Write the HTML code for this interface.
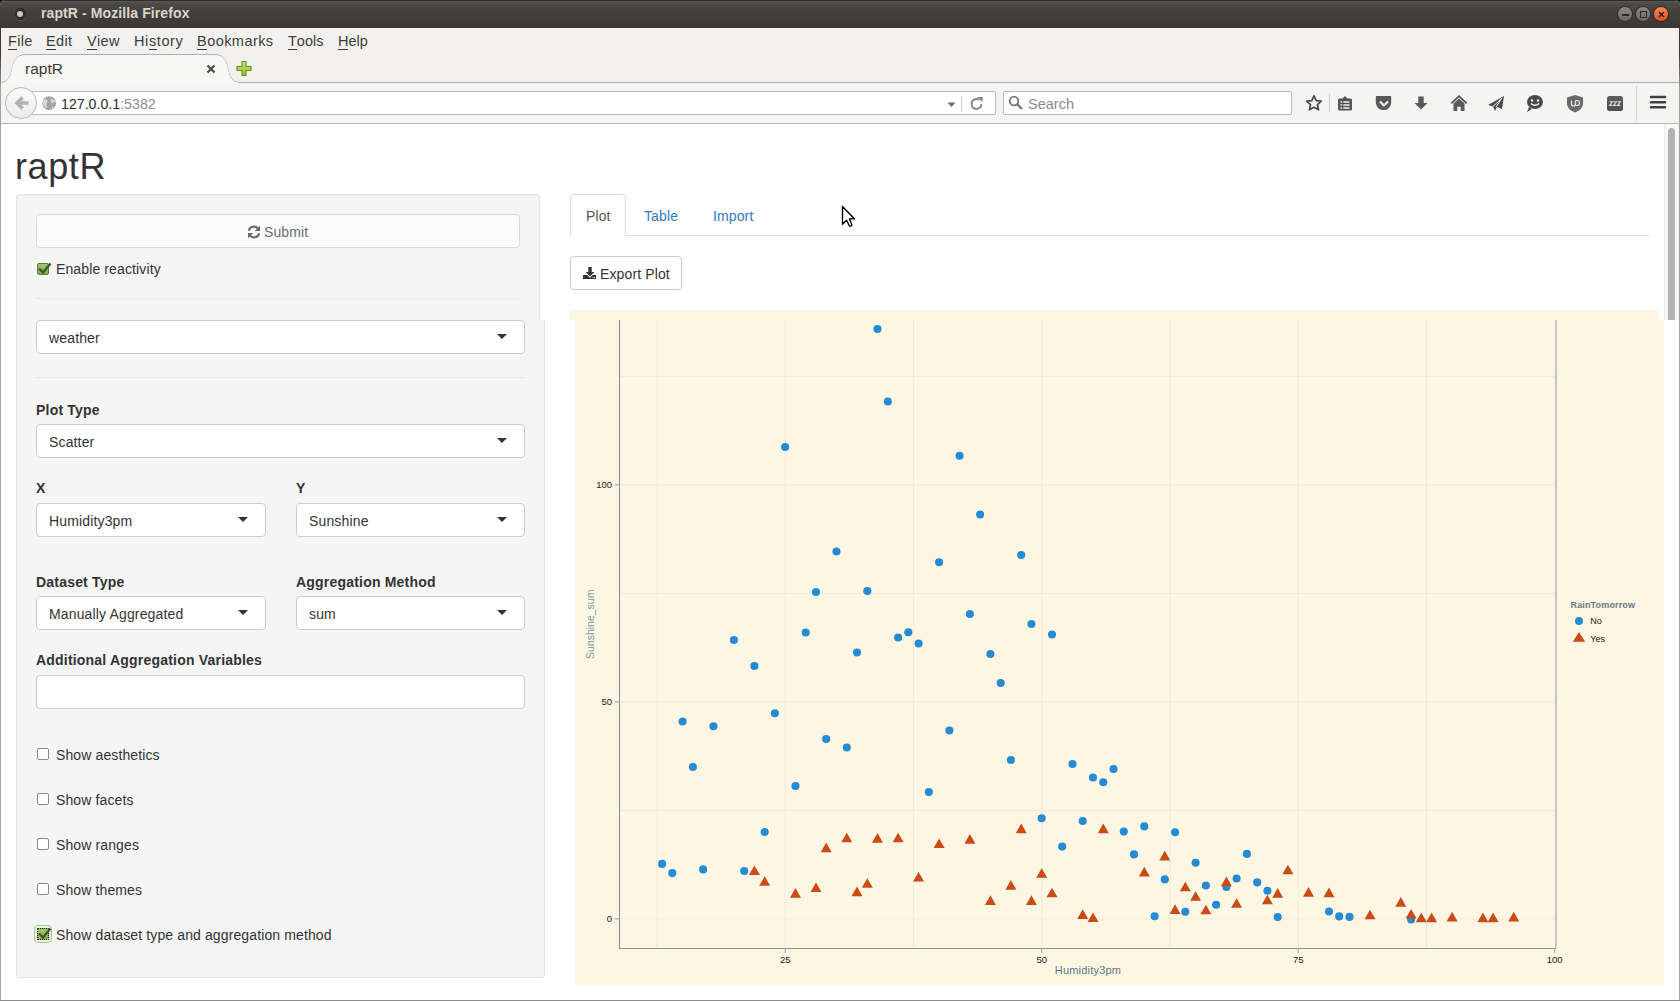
<!DOCTYPE html>
<html><head><meta charset="utf-8"><title>raptR</title>
<style>
*{box-sizing:border-box}
html,body{margin:0;padding:0}
body{width:1680px;height:1001px;overflow:hidden;position:relative;background:#000;font-family:"Liberation Sans",sans-serif;color:#333}
.a{position:absolute}
#win{left:0;top:0;width:1680px;height:1001px;background:#fff;border-radius:5px 5px 0 0;overflow:hidden}
#titlebar{left:0;top:0;width:1680px;height:28px;background:linear-gradient(#2e2d2a 0px,#2e2d2a 1px,#5a5955 1px,#4c4b47 3px,#403f3b 14px,#393834 28px)}
#ttl{left:41px;top:5px;font-size:14px;font-weight:bold;letter-spacing:0.1px;color:#d9d5cc;white-space:nowrap}
#menubar{left:0;top:28px;width:1680px;height:26px;background:#f2f1f0}
.mi{position:absolute;top:5px;font-size:14.5px;color:#3c3c3c;white-space:nowrap;line-height:16px}
.mi u{text-decoration:none;position:relative}
.mi u:after{content:"";position:absolute;left:0;right:0;top:16px;height:1px;background:#3c3c3c}
#tabstrip{left:0;top:54px;width:1680px;height:28px;background:#f2f1f0}
#navbar{left:0;top:83px;width:1680px;height:41px;background:#f4f4f3;border-bottom:1px solid #b8b5b0}
.bl{left:0;top:28px;width:1px;height:973px;background:linear-gradient(#33322e 0px,#3a3935 25px,#a5a19c 62px,#a5a19c 100%)}
.br{left:1679px;top:28px;width:1px;height:973px;background:linear-gradient(#33322e 0px,#3a3935 25px,#a5a19c 62px,#a5a19c 100%)}
.bb{left:0;top:1000px;width:1680px;height:1px;background:#8e8c88}
/* page */
.pg{font-family:"Liberation Sans",sans-serif;font-size:14px;color:#333;line-height:20px;white-space:nowrap;letter-spacing:0.12px}
.well{background:#f5f5f5;border:1px solid #e3e3e3;border-radius:4px;box-shadow:inset 0 1px 1px rgba(0,0,0,.05)}
.sel{background:#fff;border:1px solid #ccc;border-radius:4px;height:34px}
.sel span{position:absolute;left:12px;top:9px;font-size:14px;color:#333;letter-spacing:0.15px;white-space:nowrap}
.sel i{position:absolute;right:17px;top:13px;width:0;height:0;border-left:5px solid transparent;border-right:5px solid transparent;border-top:5px solid #333}
.lbl{font-weight:bold;font-size:14px;color:#333;letter-spacing:0.2px}
.cb{width:12px;height:12px;border:1px solid #8a8a8a;border-radius:2px;background:#fff}
</style></head><body>
<div id="win" class="a">
<div id="titlebar" class="a">
  <div class="a" style="left:14.5px;top:8px;width:11.5px;height:11.5px;border-radius:50%;background:#2f2e2b;box-shadow:0 1px 0 rgba(255,255,255,.14)"></div>
  <div class="a" style="left:17px;top:10.8px;width:6.3px;height:6.3px;border-radius:50%;background:#cdcac4"></div>
  <div id="ttl" class="a">raptR - Mozilla Firefox</div>
  <div class="a" style="left:1617px;top:6px;width:16px;height:16px;border-radius:50%;background:linear-gradient(#8a8985,#6a6965);border:1px solid #2f2e2b"></div>
  <div class="a" style="left:1622px;top:14px;width:7px;height:1.5px;background:#2d2c29"></div>
  <div class="a" style="left:1635px;top:6px;width:16px;height:16px;border-radius:50%;background:linear-gradient(#8a8985,#6a6965);border:1px solid #2f2e2b"></div>
  <div class="a" style="left:1640px;top:11px;width:6.5px;height:6.5px;border:1.2px solid #2d2c29"></div>
  <div class="a" style="left:1653px;top:6px;width:16px;height:16px;border-radius:50%;background:linear-gradient(#f5865a,#e2531c);border:1px solid #3a2a22"></div>
  <svg class="a" style="left:1658px;top:11px" width="7" height="7"><path d="M1 1l5 5M6 1L1 6" stroke="#2a1a12" stroke-width="1.3"/></svg>
</div>
<div id="menubar" class="a">
  <span class="mi" style="left:8px;letter-spacing:0.35px"><u>F</u>ile</span>
  <span class="mi" style="left:46px;letter-spacing:0.35px"><u>E</u>dit</span>
  <span class="mi" style="left:87px;letter-spacing:0.35px"><u>V</u>iew</span>
  <span class="mi" style="left:134px;letter-spacing:0.6px">Hi<u>s</u>tory</span>
  <span class="mi" style="left:197px;letter-spacing:0.45px"><u>B</u>ookmarks</span>
  <span class="mi" style="left:288px"><u>T</u>ools</span>
  <span class="mi" style="left:338px"><u>H</u>elp</span>
</div>
<div id="tabstrip" class="a">
  <div class="a" style="left:0;top:0;width:1680px;height:28px;background:#f1f0ef"></div>
  <div class="a" style="left:0;top:28px;width:1680px;height:1px;background:#f4f4f3"></div>
  <svg class="a" style="left:0;top:0" width="1680" height="30">
    <path d="M0 28.5 C7 28.5 10 25 12 15 C14 4 18 0.5 27 0.5 L213 0.5 C222 0.5 226 4 228 15 C230 25 233 28.5 240 28.5 L1680 28.5" fill="none" stroke="#a9aeb3" stroke-width="1"/>
    <path d="M0 29 C7 29 10 25 12 15 C14 4 18 1 27 1 L213 1 C222 1 226 4 228 15 C230 25 233 29 240 29 Z" fill="#f6f6f5"/>
  </svg>
  <div class="a pg" style="left:25px;top:5px;font-size:15.5px;color:#3a3a3a;letter-spacing:0">raptR</div>
  <svg class="a" style="left:206px;top:10px" width="10" height="10"><path d="M1.5 1.5L8.5 8.5M8.5 1.5L1.5 8.5" stroke="#4a4a4a" stroke-width="2.2"/></svg>
  <svg class="a" style="left:235px;top:6px" width="18" height="18"><defs><linearGradient id="pg" x1="0" y1="0" x2="0" y2="1"><stop offset="0" stop-color="#d8ea72"/><stop offset="1" stop-color="#8fb832"/></linearGradient></defs><path d="M7 1.5h4v5h5v4h-5v5H7v-5H2v-4h5z" fill="url(#pg)" stroke="#5e9a1f" stroke-width="1.2"/></svg>
</div>
<div id="navbar" class="a">
  <div class="a" style="left:30px;top:8px;width:966px;height:24px;background:#fff;border:1px solid #b9b9b9;border-radius:2px"></div>
  <div class="a" style="left:5px;top:4px;width:32px;height:32px;border-radius:50%;background:linear-gradient(#fbfbfb,#ececec);border:1px solid #b2bac2"></div>
  <svg class="a" style="left:12px;top:11px" width="18" height="18"><path d="M16.5 9H5M10.5 3.5L5 9l5.5 5.5" stroke="#b0b0b0" stroke-width="3.6" fill="none" stroke-linejoin="miter" stroke-linecap="butt"/></svg>
  <svg class="a" style="left:42px;top:13px" width="15" height="15"><circle cx="7.2" cy="7.2" r="6.9" fill="#a2a2a2"/><path d="M3.2 3c1.6.2 2.6 1.3 2.4 2.6-.2 1.2-1.4 1.6-1.2 2.9.2 1.3 1 2.2.6 3.6C3 11.5 1.6 10 1 8c-.4-2 .6-4 2.2-5zM8.3 1.2c.8.6.4 1.7 1.4 2.2 1 .4 2.6-.3 3.4.7.6 1.2-.4 2.2-1.6 2.4-1.3.2-2.2.6-2.2 1.8 0 1.3 1.5 1.8 1.8 3.1.2.8-.1 1.6-.6 2.2" fill="#dadada"/></svg>
  <div class="a" style="left:61px;top:12.5px;font-size:14.2px;color:#2e2e2e;white-space:nowrap">127.0.0.1<span style="color:#8c8c8c">:5382</span></div>
  <svg class="a" style="left:947px;top:19px" width="9" height="6"><path d="M0.5 0.5h8L4.5 5z" fill="#6f6f6f"/></svg>
  <div class="a" style="left:961px;top:13px;width:1px;height:16px;background:#d0d0d0"></div>
  <svg class="a" style="left:969px;top:13px" width="16" height="16"><path d="M12.5 8A5 5 0 1 1 10 3.6" stroke="#888" stroke-width="2" fill="none"/><path d="M8 1l6 0l-1 5z" fill="#888"/></svg>
  <div class="a" style="left:1003px;top:8px;width:289px;height:24px;background:#fff;border:1px solid #b9b9b9;border-radius:2px"></div>
  <svg class="a" style="left:1008px;top:12px" width="16" height="16"><circle cx="6" cy="6" r="4.3" stroke="#777" stroke-width="1.8" fill="none"/><path d="M9 9l5 5" stroke="#777" stroke-width="2.4"/></svg>
  <div class="a" style="left:1028px;top:12.5px;font-size:14.5px;color:#8c8c8c">Search</div>
  <!-- toolbar icons -->
  <svg class="a" style="left:1304px;top:10px" width="20" height="20"><path d="M10 2.8l2.2 4.8 5.1.6-3.8 3.5 1.1 5.1L10 14.2l-4.6 2.6 1.1-5.1-3.8-3.5 5.1-.6z" fill="none" stroke="#4a4a4a" stroke-width="1.7" stroke-linejoin="round"/></svg>
  <div class="a" style="left:1329px;top:11px;width:1px;height:18px;background:#c9cfd6"></div>
  <svg class="a" style="left:1337px;top:12px" width="16" height="17"><rect x="1" y="3.5" width="14" height="12" rx="1.5" fill="#555"/><path d="M5 4L8 1l3 3z" fill="#555"/><path d="M3.5 7h1.6M6.3 7h6.2M3.5 10h1.6M6.3 10h6.2M3.5 13h1.6M6.3 13h6.2" stroke="#f4f4f3" stroke-width="1.4"/></svg>
  <svg class="a" style="left:1375px;top:12px" width="18" height="16"><path d="M1.5 1.8h14v5.8a7 6.8 0 0 1-14 0z" fill="#595959" stroke="#595959" stroke-linejoin="round" stroke-width="1.4"/><path d="M5 6.5l4 4 4-4" stroke="#f2f1f0" stroke-width="2.2" fill="none"/></svg>
  <svg class="a" style="left:1413px;top:12px" width="16" height="17"><path d="M5.3 1.5h5.4v6.5h3.8L8 14.5 1.5 8h3.8z" fill="#595959"/></svg>
  <svg class="a" style="left:1450px;top:12px" width="18" height="17"><path d="M1.3 8.3L9 1.2l7.7 7.1" stroke="#555" stroke-width="1.8" fill="none"/><path d="M3.5 8.5L9 3.6l5.5 4.9V16h-3.8v-4.2H7.3V16H3.5z" fill="#5a5a5a"/></svg>
  <svg class="a" style="left:1487px;top:12px" width="18" height="17" viewBox="0 0 18 17" preserveAspectRatio="none"><path d="M17 1L1 10l5 1.5L8 16l2-4 5 2z" fill="#4a4a4a"/><path d="M6 11.5L15 3 9 12" stroke="#f2f1f0" stroke-width="1" fill="none"/></svg>
  <svg class="a" style="left:1526px;top:11px" width="18" height="19"><ellipse cx="9" cy="8" rx="8" ry="7" fill="#4a4a4a"/><path d="M3 13l-2 5 5-3z" fill="#4a4a4a"/><circle cx="6" cy="6.5" r="1.2" fill="#f2f1f0"/><circle cx="12" cy="6.5" r="1.2" fill="#f2f1f0"/><path d="M5 9.5q4 3.5 8 0" stroke="#f2f1f0" stroke-width="1.4" fill="none"/></svg>
  <svg class="a" style="left:1566px;top:11px" width="18" height="19"><path d="M9 1l8 2.5v6C17 14 13 17 9 18.5 5 17 1 14 1 9.5v-6z" fill="#6a6a6a"/><path d="M5.5 6.5v3.5a2 2 0 0 0 4 0V6.5M9.5 6.5h1.5a2.5 2.5 0 0 1 0 5H9.5" stroke="#e6e6e6" stroke-width="1.2" fill="none"/></svg>
  <svg class="a" style="left:1607px;top:12.5px" width="17" height="16"><defs><linearGradient id="zg" x1="0" y1="0" x2="0" y2="1"><stop offset="0" stop-color="#5e5e5e"/><stop offset="1" stop-color="#505050"/></linearGradient></defs><rect x="0" y="0" width="16" height="15" rx="2.5" fill="url(#zg)"/><path d="M2.6 5.8h2.8L2.6 9.4h2.8M6.6 5.8h2.8L6.6 9.4h2.8M10.6 5.8h2.8l-2.8 3.6h2.8" stroke="#dcdcdc" stroke-width="1.1" fill="none"/></svg>
  <div class="a" style="left:1636px;top:3px;width:1px;height:35px;background:#d4d2cf"></div>
  <svg class="a" style="left:1648px;top:11px" width="20" height="17"><path d="M3 2.9H17M3 8.3H17M3 13.3H17" stroke="#3f3f3f" stroke-width="2.5" stroke-linecap="round"/></svg>
</div>
<!-- PAGE -->
<div class="a" style="left:1664px;top:124px;width:15px;height:196px;background:#f9f9f9;border-left:1px solid #efefef"></div>
<div class="a" style="left:1668px;top:128px;width:7px;height:192px;background:#b3b3b3;border-radius:4px 4px 0 0"></div>

<div class="a pg" style="left:15px;top:147px;font-size:36px;line-height:40px;font-weight:500;letter-spacing:0.6px">raptR</div>

<!-- well -->
<div class="a" style="left:16px;top:194px;width:524px;height:126px;background:#f5f5f5;border:1px solid #e3e3e3;border-bottom:none;border-radius:4px 4px 0 0;box-shadow:inset 0 1px 1px rgba(0,0,0,.04)"></div>
<div class="a" style="left:16px;top:320px;width:529px;height:658px;background:#f5f5f5;border:1px solid #e3e3e3;border-top:none;border-radius:0 0 4px 4px"></div>
<!-- submit -->
<div class="a" style="left:36px;top:214px;width:484px;height:34px;background:#fbfbfb;border:1px solid #d8d8d8;border-radius:4px"></div>
<svg class="a" style="left:247px;top:225px" width="14" height="14"><g fill="none" stroke="#6a6a6a" stroke-width="2.1"><path d="M1.7 5.6A5.5 5.5 0 0 1 11.2 3.6"/><path d="M12.3 8.4A5.5 5.5 0 0 1 2.8 10.4"/></g><g fill="#6a6a6a"><path d="M13 0.7V6H7.7Z"/><path d="M1 13.3V8H6.3Z"/></g></svg>
<div class="a pg" style="left:264px;top:222px;color:#6d6d6d">Submit</div>

<div class="a" style="left:37px;top:263px;width:12px;height:12px;background:linear-gradient(#a3c46c,#86ad4e);border:1px solid #5a7a38;border-radius:2px"></div>
<svg class="a" style="left:36px;top:260px" width="17" height="16"><path d="M3 8.5l4 4L14.5 3.5" stroke="#3f5530" stroke-width="2.4" fill="none"/></svg>
<div class="a pg" style="left:56px;top:259px">Enable reactivity</div>

<div class="a" style="left:36px;top:298px;width:484px;height:1px;background:#e8e8e8"></div>

<div class="a sel" style="left:36px;top:320px;width:489px"><span>weather</span><i></i></div>
<div class="a" style="left:36px;top:377px;width:489px;height:1px;background:#e8e8e8"></div>

<div class="a pg lbl" style="left:36px;top:400px">Plot Type</div>
<div class="a sel" style="left:36px;top:424px;width:489px"><span>Scatter</span><i></i></div>

<div class="a pg lbl" style="left:36px;top:478px">X</div>
<div class="a sel" style="left:36px;top:503px;width:230px"><span>Humidity3pm</span><i></i></div>
<div class="a pg lbl" style="left:296px;top:478px">Y</div>
<div class="a sel" style="left:296px;top:503px;width:229px"><span>Sunshine</span><i></i></div>

<div class="a pg lbl" style="left:36px;top:572px">Dataset Type</div>
<div class="a sel" style="left:36px;top:596px;width:230px"><span>Manually Aggregated</span><i></i></div>
<div class="a pg lbl" style="left:296px;top:572px">Aggregation Method</div>
<div class="a sel" style="left:296px;top:596px;width:229px"><span>sum</span><i></i></div>

<div class="a pg lbl" style="left:36px;top:650px">Additional Aggregation Variables</div>
<div class="a sel" style="left:36px;top:675px;width:489px"></div>

<div class="a cb" style="left:37px;top:748px"></div><div class="a pg" style="left:56px;top:745px">Show aesthetics</div>
<div class="a cb" style="left:37px;top:793px"></div><div class="a pg" style="left:56px;top:790px">Show facets</div>
<div class="a cb" style="left:37px;top:838px"></div><div class="a pg" style="left:56px;top:835px">Show ranges</div>
<div class="a cb" style="left:37px;top:883px"></div><div class="a pg" style="left:56px;top:880px">Show themes</div>
<div class="a" style="left:34px;top:925px;width:18px;height:18px;border:1.5px solid #a8cf8a;border-radius:4px;background:#eaf3e3"></div>
<div class="a" style="left:37px;top:928px;width:12px;height:12px;background:linear-gradient(#a3c46c,#86ad4e);border:1px dotted #222;border-radius:1px"></div>
<svg class="a" style="left:36px;top:925px" width="17" height="16"><path d="M3 8.5l4 4L14.5 3.5" stroke="#3f5530" stroke-width="2.4" fill="none"/></svg>
<div class="a pg" style="left:56px;top:925px">Show dataset type and aggregation method</div>

<!-- tabs -->
<div class="a" style="left:570px;top:235px;width:1079px;height:1px;background:#ddd"></div>
<div class="a" style="left:570px;top:194px;width:56px;height:42px;background:#fff;border:1px solid #ddd;border-bottom-color:#fff;border-radius:4px 4px 0 0"></div>
<div class="a pg" style="left:586px;top:206px;color:#555">Plot</div>
<div class="a pg" style="left:644px;top:206px;color:#337ab7">Table</div>
<div class="a pg" style="left:713px;top:206px;color:#337ab7">Import</div>

<div class="a" style="left:570px;top:256px;width:112px;height:34px;background:#fff;border:1px solid #ccc;border-radius:4px"></div>
<svg class="a" style="left:583px;top:266px" width="14" height="14"><path d="M5.3 1h3.4v5h2.8L7 10.3 2.5 6h2.8z" fill="#333"/><path d="M0 9h4.2L7 11.8 9.8 9H13v4H0z" fill="#333"/><circle cx="10" cy="11.6" r=".6" fill="#fff"/><circle cx="11.7" cy="11.6" r=".6" fill="#fff"/></svg>
<div class="a pg" style="left:600px;top:264px">Export Plot</div>

<!-- PLOT -->
<div class="a" style="left:570px;top:310px;width:1089px;height:10px;background:#fdf6e3"></div>
<div class="a" style="left:575px;top:320px;width:1089px;height:665px;background:#fdf6e3"></div>
<svg class="a" style="left:0;top:0" width="1680" height="1001" id="plot">
<g stroke="#f0ead8" stroke-width="1" fill="none"><path d="M657.0 320V948"/><path d="M785.2 320V948"/><path d="M913.5 320V948"/><path d="M1041.7 320V948"/><path d="M1170.0 320V948"/><path d="M1298.2 320V948"/><path d="M1426.5 320V948"/><path d="M620 918.9H1555"/><path d="M620 810.4H1555"/><path d="M620 701.9H1555"/><path d="M620 593.4H1555"/><path d="M620 484.9H1555"/><path d="M620 376.4H1555"/></g>
<path d="M619.5 320V948.5H1556" stroke="#85959a" stroke-width="1.1" fill="none"/>
<path d="M1556 320V948" stroke="#bdc3bd" stroke-width="1.8" fill="none"/>
<g stroke="#93a1a1" stroke-width="1"><path d="M785.2 948.4V953"/><path d="M1041.7 948.4V953"/><path d="M1298.2 948.4V953"/><path d="M1554.7 948.4V953"/><path d="M615 918.9H619.5"/><path d="M615 701.9H619.5"/><path d="M615 484.9H619.5"/></g>
<g font-family="Liberation Sans" font-size="9.5px" fill="#1a1a1a"><text x="785.2" y="963" text-anchor="middle">25</text><text x="1041.7" y="963" text-anchor="middle">50</text><text x="1298.2" y="963" text-anchor="middle">75</text><text x="1554.7" y="963" text-anchor="middle">100</text><text x="612" y="922.3" text-anchor="end">0</text><text x="612" y="705.3" text-anchor="end">50</text><text x="612" y="488.3" text-anchor="end">100</text></g>
<text x="1088" y="974" text-anchor="middle" font-family="Liberation Sans" font-size="11px" letter-spacing="0.2" fill="#5e7884">Humidity3pm</text>
<text transform="translate(594 624.3) rotate(-90)" text-anchor="middle" font-family="Liberation Sans" font-size="10.5px" fill="#7d98a3">Sunshine_sum</text>
<g fill="#268bd2"><circle cx="877.5" cy="329.0" r="4.05"/><circle cx="887.8" cy="401.5" r="4.05"/><circle cx="785.2" cy="447.0" r="4.05"/><circle cx="836.5" cy="551.5" r="4.05"/><circle cx="959.6" cy="455.8" r="4.05"/><circle cx="980.1" cy="514.5" r="4.05"/><circle cx="1021.2" cy="555.0" r="4.05"/><circle cx="816.0" cy="592.0" r="4.05"/><circle cx="867.3" cy="591.0" r="4.05"/><circle cx="733.9" cy="640.0" r="4.05"/><circle cx="805.7" cy="632.5" r="4.05"/><circle cx="898.1" cy="637.5" r="4.05"/><circle cx="857.0" cy="652.5" r="4.05"/><circle cx="754.4" cy="666.0" r="4.05"/><circle cx="774.9" cy="713.2" r="4.05"/><circle cx="682.6" cy="721.5" r="4.05"/><circle cx="713.4" cy="726.2" r="4.05"/><circle cx="826.2" cy="739.0" r="4.05"/><circle cx="846.8" cy="747.5" r="4.05"/><circle cx="692.9" cy="767.0" r="4.05"/><circle cx="795.5" cy="786.0" r="4.05"/><circle cx="939.1" cy="562.2" r="4.05"/><circle cx="969.9" cy="614.0" r="4.05"/><circle cx="1031.4" cy="624.0" r="4.05"/><circle cx="1052.0" cy="634.5" r="4.05"/><circle cx="908.3" cy="632.2" r="4.05"/><circle cx="918.6" cy="643.5" r="4.05"/><circle cx="990.4" cy="654.0" r="4.05"/><circle cx="1000.7" cy="683.0" r="4.05"/><circle cx="949.4" cy="730.5" r="4.05"/><circle cx="1010.9" cy="760.0" r="4.05"/><circle cx="1072.5" cy="764.0" r="4.05"/><circle cx="1113.5" cy="769.0" r="4.05"/><circle cx="1093.0" cy="777.5" r="4.05"/><circle cx="1103.3" cy="782.2" r="4.05"/><circle cx="764.7" cy="832.0" r="4.05"/><circle cx="662.1" cy="863.9" r="4.05"/><circle cx="672.3" cy="873.1" r="4.05"/><circle cx="703.1" cy="869.4" r="4.05"/><circle cx="744.2" cy="871.0" r="4.05"/><circle cx="928.8" cy="792.1" r="4.05"/><circle cx="1041.7" cy="818.2" r="4.05"/><circle cx="1082.7" cy="821.0" r="4.05"/><circle cx="1062.2" cy="846.6" r="4.05"/><circle cx="1123.8" cy="831.6" r="4.05"/><circle cx="1144.3" cy="826.4" r="4.05"/><circle cx="1175.1" cy="832.3" r="4.05"/><circle cx="1134.0" cy="854.4" r="4.05"/><circle cx="1195.6" cy="862.7" r="4.05"/><circle cx="1246.9" cy="853.9" r="4.05"/><circle cx="1164.8" cy="879.4" r="4.05"/><circle cx="1205.9" cy="885.5" r="4.05"/><circle cx="1226.4" cy="886.9" r="4.05"/><circle cx="1236.6" cy="878.5" r="4.05"/><circle cx="1257.2" cy="882.4" r="4.05"/><circle cx="1267.4" cy="890.8" r="4.05"/><circle cx="1216.1" cy="904.7" r="4.05"/><circle cx="1185.3" cy="911.8" r="4.05"/><circle cx="1154.6" cy="916.2" r="4.05"/><circle cx="1277.7" cy="917.1" r="4.05"/><circle cx="1329.0" cy="911.5" r="4.05"/><circle cx="1339.2" cy="916.4" r="4.05"/><circle cx="1349.5" cy="916.9" r="4.05"/><circle cx="1411.1" cy="919.5" r="4.05"/></g>
<g fill="#cb4b16"><path d="M754.4 865.4L759.9 875.0L748.9 875.0Z"/><path d="M764.7 876.2L770.2 885.8L759.2 885.8Z"/><path d="M795.5 888.1L801.0 897.7L790.0 897.7Z"/><path d="M816.0 882.5L821.5 892.1L810.5 892.1Z"/><path d="M826.2 842.6L831.7 852.2L820.7 852.2Z"/><path d="M846.8 832.7L852.3 842.3L841.3 842.3Z"/><path d="M857.0 886.6L862.5 896.2L851.5 896.2Z"/><path d="M867.3 878.2L872.8 887.8L861.8 887.8Z"/><path d="M877.5 833.1L883.0 842.7L872.0 842.7Z"/><path d="M898.1 832.7L903.6 842.3L892.6 842.3Z"/><path d="M939.1 838.5L944.6 848.1L933.6 848.1Z"/><path d="M969.9 834.1L975.4 843.7L964.4 843.7Z"/><path d="M1021.2 823.6L1026.7 833.2L1015.7 833.2Z"/><path d="M1103.3 823.6L1108.8 833.2L1097.8 833.2Z"/><path d="M918.6 872.0L924.1 881.6L913.1 881.6Z"/><path d="M990.4 895.3L995.9 904.9L984.9 904.9Z"/><path d="M1010.9 880.1L1016.4 889.7L1005.4 889.7Z"/><path d="M1031.4 895.3L1036.9 904.9L1025.9 904.9Z"/><path d="M1041.7 868.2L1047.2 877.8L1036.2 877.8Z"/><path d="M1052.0 887.7L1057.5 897.3L1046.5 897.3Z"/><path d="M1082.7 909.3L1088.2 918.9L1077.2 918.9Z"/><path d="M1093.0 912.5L1098.5 922.1L1087.5 922.1Z"/><path d="M1164.8 850.8L1170.3 860.4L1159.3 860.4Z"/><path d="M1144.3 866.8L1149.8 876.4L1138.8 876.4Z"/><path d="M1185.3 881.7L1190.8 891.3L1179.8 891.3Z"/><path d="M1195.6 891.2L1201.1 900.8L1190.1 900.8Z"/><path d="M1175.1 904.3L1180.6 913.9L1169.6 913.9Z"/><path d="M1205.9 904.7L1211.4 914.3L1200.4 914.3Z"/><path d="M1226.4 876.6L1231.9 886.2L1220.9 886.2Z"/><path d="M1236.6 898.2L1242.1 907.8L1231.1 907.8Z"/><path d="M1267.4 894.7L1272.9 904.3L1261.9 904.3Z"/><path d="M1277.7 888.1L1283.2 897.7L1272.2 897.7Z"/><path d="M1287.9 864.7L1293.4 874.3L1282.4 874.3Z"/><path d="M1308.5 887.1L1314.0 896.7L1303.0 896.7Z"/><path d="M1329.0 887.6L1334.5 897.2L1323.5 897.2Z"/><path d="M1370.0 909.7L1375.5 919.3L1364.5 919.3Z"/><path d="M1400.8 897.1L1406.3 906.7L1395.3 906.7Z"/><path d="M1411.1 908.9L1416.6 918.5L1405.6 918.5Z"/><path d="M1421.3 912.6L1426.8 922.2L1415.8 922.2Z"/><path d="M1431.6 912.6L1437.1 922.2L1426.1 922.2Z"/><path d="M1452.1 911.8L1457.6 921.4L1446.6 921.4Z"/><path d="M1482.9 912.6L1488.4 922.2L1477.4 922.2Z"/><path d="M1493.1 912.6L1498.6 922.2L1487.6 922.2Z"/><path d="M1513.7 911.8L1519.2 921.4L1508.2 921.4Z"/></g>
<text x="1570.5" y="608" font-family="Liberation Sans" font-size="9px" font-weight="bold" fill="#657b83" letter-spacing="0.15">RainTomorrow</text>
<circle cx="1579" cy="621" r="4" fill="#268bd2"/>
<path d="M1579 632L1585.2 641.8L1572.8 641.8Z" fill="#cb4b16"/>
<text x="1590.3" y="624" font-family="Liberation Sans" font-size="9px" fill="#1a1a1a">No</text>
<text x="1590.3" y="641.5" font-family="Liberation Sans" font-size="9px" fill="#1a1a1a">Yes</text>
</svg>

<svg class="a" style="left:838px;top:203px" width="20" height="26"><path d="M4.5 3.5V21.2L8.6 17.2 11.2 22.6Q12 23.6 13.2 22.9 14.2 22.2 13.6 21.1L11.4 15.9H16.6Z" fill="#fff" stroke="#000" stroke-width="1.4" stroke-linejoin="round"/></svg>
<div class="a bl"></div><div class="a br"></div><div class="a bb"></div>
</div>
</body></html>
